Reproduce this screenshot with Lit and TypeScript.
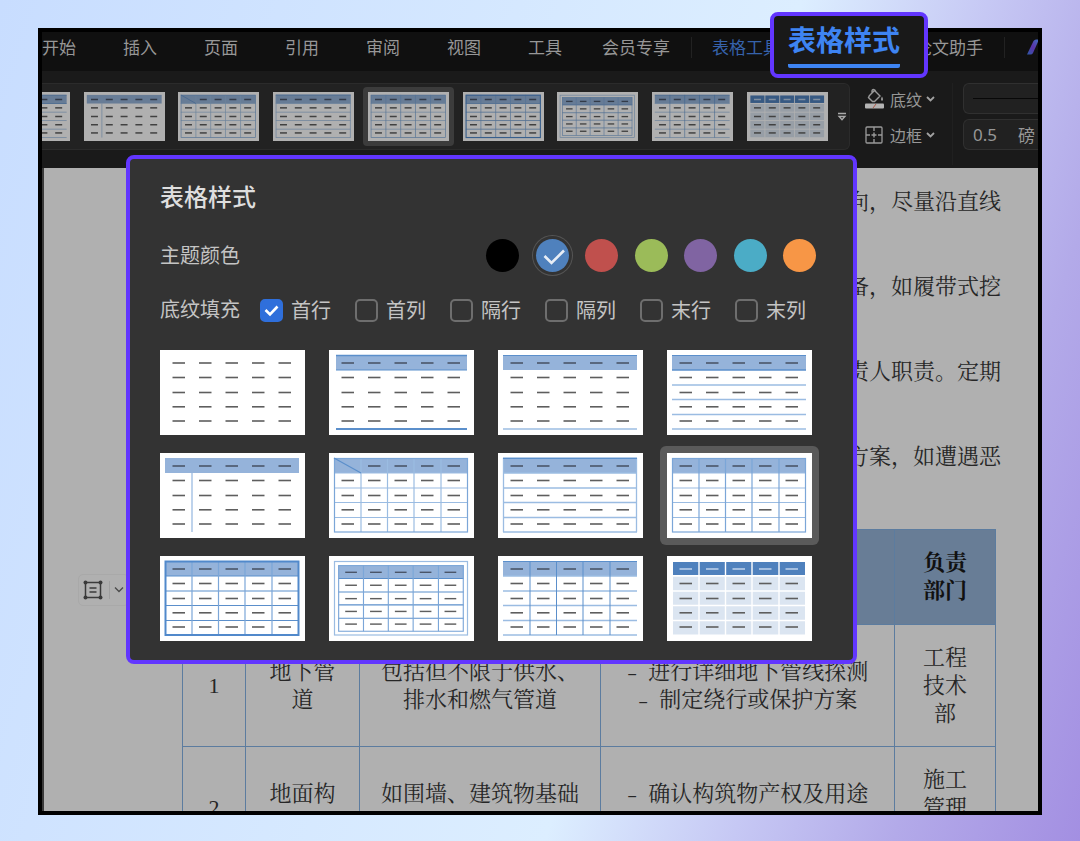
import { LitElement, html, svg, css, nothing } from "lit";
import { customElement, property } from "lit/decorators.js";
import { classMap } from "lit/directives/class-map.js";
import { styleMap } from "lit/directives/style-map.js";

type Kind =
  | "plain" | "heavy" | "light" | "rows" | "stem" | "diagonal"
  | "boxed-rows" | "grid" | "thick" | "double" | "open" | "filled";

const KINDS: { kind: Kind; name: string }[] = [
  { kind: "plain", name: "无框线" },
  { kind: "heavy", name: "上下粗线" },
  { kind: "light", name: "上下细线" },
  { kind: "rows", name: "横线" },
  { kind: "stem", name: "首列竖线" },
  { kind: "diagonal", name: "斜线表头" },
  { kind: "boxed-rows", name: "外框横线" },
  { kind: "grid", name: "网格" },
  { kind: "thick", name: "粗外框网格" },
  { kind: "double", name: "双外框网格" },
  { kind: "open", name: "开放网格" },
  { kind: "filled", name: "填充" },
];

const COLS = [5, 32, 58.5, 85, 112, 139];
const ROWS = [5, 20, 35, 49.5, 64.5, 79];
const LINE = "#5b8fcb";
const SOFT = "#9bbce2";
const HEAD = "#95b3da";

/** Miniature table drawn on a 145 x 85 sheet. */
@customElement("style-thumb")
export class StyleThumb extends LitElement {
  @property() kind: Kind = "plain";
  @property({ type: Number }) dash = 1.6;

  static styles = css`
    :host { display: block; background: #fff; }
    svg { display: block; width: 100%; height: 100%; }
  `;

  private hline(y: number, color = SOFT, w = 1.3, x1 = 5, x2 = 139) {
    return svg`<path d="M${x1} ${y}H${x2}" stroke=${color} stroke-width=${w} />`;
  }

  private vline(x: number, color = SOFT, w = 1.3, y1 = 5, y2 = 79) {
    return svg`<path d="M${x} ${y1}V${y2}" stroke=${color} stroke-width=${w} />`;
  }

  private dashes() {
    const xs = [12.5, 39, 65.5, 92, 118.5];
    const ys = [13, 27.5, 42.5, 56.8, 71];
    return ys.flatMap((y, r) =>
      xs.map((x, c) => {
        if (this.kind === "diagonal" && r === 0 && c === 0) return nothing;
        const color = this.kind === "filled" && r === 0 ? "#b9cfe9" : r === 0 && this.kind !== "plain" ? "#4a5568" : "#5e5e5e";
        return svg`<path d="M${x} ${y}h12.5" stroke=${color} stroke-width=${this.dash} />`;
      })
    );
  }

  private head() {
    return svg`<rect x="5" y="5" width="134" height="15" fill=${HEAD} />`;
  }

  private body() {
    const k = this.kind;
    const inner = ROWS.slice(1, 5);
    const innerCols = COLS.slice(1, 5);
    switch (k) {
      case "plain":
        return this.dashes();
      case "heavy":
        return svg`<rect x="7" y="5" width="131" height="15" fill=${HEAD} />
          ${this.hline(5.5, LINE, 1.6, 7, 138)}${this.hline(20, LINE, 1, 7, 138)}
          ${this.hline(79, LINE, 2, 7, 138)}${this.dashes()}`;
      case "light":
        return svg`${this.head()}${this.hline(5.5, LINE, 1)}${this.hline(79)}${this.dashes()}`;
      case "rows":
        return svg`${this.head()}${this.hline(5.5, LINE, 1)}${this.hline(20, LINE)}
          ${ROWS.slice(2).map((y) => this.hline(y))}${this.dashes()}`;
      case "stem":
        return svg`${this.head()}${this.vline(32, SOFT, 1.3, 20, 79)}${this.dashes()}`;
      case "boxed-rows":
        return svg`${this.head()}${ROWS.map((y) => this.hline(y))}
          ${this.vline(5.5)}${this.vline(138.5)}${this.hline(5.5, LINE, 1)}${this.dashes()}`;
      case "open":
        return svg`${this.head()}${this.hline(5.5, LINE, 1)}${ROWS.slice(1).map((y) => this.hline(y))}
          ${innerCols.map((x) => this.vline(x, LINE, 1))}${this.dashes()}`;
      case "filled":
        return svg`<rect x="6" y="6" width="132" height="13" fill="#4f81bd" />
          <rect x="6" y="20" width="132" height="58.5" fill="#dbe5f1" />
          ${inner.map((y) => this.hline(y, "#fff", 1.6))}${innerCols.map((x) => this.vline(x, "#fff", 1.4))}
          ${this.dashes()}`;
      default:
        return svg`${this.head()}
          ${inner.map((y) => this.hline(y, k === "grid" || k === "diagonal" ? SOFT : LINE, 1.2))}
          ${innerCols.map((x) => this.vline(x, k === "diagonal" ? SOFT : "#7ba6d8", 1.2))}
          <rect x="5.5" y="5.5" width="133" height="73.5" fill="none"
            stroke=${k === "thick" ? "#5189cb" : "#7ba6d8"} stroke-width=${k === "thick" ? 2 : 1.2} />
          ${k === "diagonal" ? svg`<path d="M5 5L32 20" stroke=${LINE} stroke-width="1.2" />` : nothing}
          ${this.dashes()}`;
    }
  }

  render() {
    return html`<svg viewBox="0 0 145 85" preserveAspectRatio="none" fill="none" aria-hidden="true">
      ${this.kind === "double"
        ? svg`<rect x="5.5" y="5.5" width="133" height="73.5" stroke=${SOFT} stroke-width="1.2" />
            <g transform="translate(4.5 4.7) scale(.937 .893)">${this.body()}</g>`
        : this.body()}
    </svg>`;
  }
}

/** Drop-down of table styles: theme colour, shading options and presets. */
@customElement("style-panel")
export class StylePanel extends LitElement {
  static styles = css`
    :host {
      display: block;
      box-sizing: border-box;
      padding: 21px 30px 19px;
      border: 4px solid #6236ff;
      border-radius: 8px;
      background: #333;
      color: #c4c4c4;
      font: 20px/28px "Noto Sans CJK SC", sans-serif;
    }
    h2 { margin: 0; font-size: 24px; line-height: 32px; font-weight: 500; color: #dedede; }
    .row { display: flex; align-items: center; margin: 0; padding: 0; border: 0; }
    .colors { justify-content: space-between; margin-top: 23px; height: 40px; }
    .swatches { display: flex; justify-content: space-between; width: 330px; margin-right: 7px; }
    .swatch { position: relative; display: block; width: 33px; height: 33px; }
    .swatch input, .opt input { appearance: none; display: block; margin: 0; box-sizing: border-box; }
    .swatch input { width: 33px; height: 33px; border-radius: 50%; background: var(--c); }
    .swatch input:checked { box-shadow: 0 0 0 3px #333, 0 0 0 4px #555; }
    .swatch svg, .opt svg { position: absolute; left: 0; top: 0; pointer-events: none; }
    .fills { margin-top: 19px; height: 32px; }
    .fills .label { width: 100px; flex: none; padding-bottom: 3px; }
    .opt { position: relative; display: flex; align-items: center; gap: 8px; width: 95px; flex: none; }
    .opt:last-child { width: auto; }
    .opt input { width: 23px; height: 23px; border: 2px solid #6e6e6e; border-radius: 5px; flex: none; }
    .opt input:checked { border-color: #2f6fdb; background: #2f6fdb; }
    .opt svg { top: 3px; }
    .presets { display: grid; grid-template-columns: repeat(4, 145px); gap: 18px 24px; margin-top: 24px; }
    .preset { padding: 0; border: 0; background: none; height: 85px; }
    .preset style-thumb { height: 85px; }
    .preset.on { box-sizing: content-box; margin: -7px; padding: 7px; border-radius: 6px; background: #5a5a5a; }
  `;

  private colors = [
    ["黑色", "#000000"], ["蓝色", "#4f81bd"], ["红色", "#c0504d"], ["绿色", "#9bbb59"],
    ["紫色", "#8064a2"], ["青色", "#4bacc6"], ["橙色", "#f79646"],
  ];
  private options = ["首行", "首列", "隔行", "隔列", "末行", "末列"];

  render() {
    return html`
      <h2>表格样式</h2>
      <div class="row colors">
        <span>主题颜色</span>
        <div class="swatches" role="radiogroup" aria-label="主题颜色">
          ${this.colors.map(([name, value], i) => html`
            <label class="swatch" style=${styleMap({ "--c": value })}>
              <input type="radio" name="theme" aria-label=${name} .checked=${i === 1} />
              ${i === 1 ? html`<svg width="33" height="33" viewBox="0 0 33 33" fill="none" aria-hidden="true">
                <path d="M8.500 17l7 7L28 11.500" stroke="#e8eef6" stroke-width="2.600" /></svg>` : nothing}
            </label>`)}
        </div>
      </div>
      <div class="row fills" role="group" aria-label="底纹填充">
        <span class="label">底纹填充</span>
        ${this.options.map((name, i) => html`
          <label class="opt">
            <input type="checkbox" .checked=${i === 0} />
            ${i === 0 ? html`<svg width="23" height="23" viewBox="0 0 23 23" fill="none" aria-hidden="true">
              <path d="M5.500 11l4.500 4.500L17.500 7.500" stroke="#fff" stroke-width="2.600" /></svg>` : nothing}
            <span>${name}</span>
          </label>`)}
      </div>
      <div class="presets">
        ${KINDS.map(({ kind, name }) => html`
          <button class=${classMap({ preset: true, on: kind === "grid" })} aria-label=${name}>
            <style-thumb .kind=${kind}></style-thumb>
          </button>`)}
      </div>`;
  }
}

@customElement("ribbon-bar")
export class RibbonBar extends LitElement {
  static styles = css`
    :host { display: block; color: #979797; font: 17px/24px "Noto Sans CJK SC", sans-serif; }
    button { font: inherit; color: inherit; background: none; border: 0; padding: 0; margin: 0; }
    .tabs { display: flex; align-items: center; height: 39px; padding-bottom: 9px; box-sizing: border-box; background: #101010; white-space: nowrap; overflow: hidden; }
    .tabs button { flex: none; }
    .main { display: flex; gap: 47px; flex: none; }
    .member { margin-left: 40px; }
    .sep { width: 1px; height: 21px; margin: 0 20px 0 21px; background: #222; flex: none; }
    .tool { color: #3662ab; margin-right: 135px; }
    .logo { flex: none; }
    .tools { display: flex; align-items: flex-start; height: 97px; padding-top: 12px; box-sizing: border-box; background: #1a1a1a; overflow: hidden; }
    .gallery {
      flex: 1; min-width: 0; display: flex; justify-content: flex-end; align-items: center; overflow: hidden;
      height: 67px; box-sizing: border-box; border: solid #2b2b2b; border-width: 1px 1px 1px 0;
      border-radius: 0 6px 6px 0; background: #222;
    }
    .strip { display: flex; justify-content: space-between; width: 839px; flex: none; }
    .item { width: 81px; height: 49px; flex: none; }
    .item style-thumb { height: 49px; filter: brightness(0.69); }
    .item.on { box-sizing: content-box; margin: -5px; padding: 5px; border-radius: 4px; background: #3c3c3c; }
    .more { width: 21px; flex: none; padding-left: 9px; }
    .more svg { display: block; }
    .pair { flex: none; margin-left: 14px; padding-top: 4px; display: grid; gap: 12px; font-size: 16px; }
    .pair button { display: flex; align-items: center; line-height: 24px; }
    .pair span { margin: 0 4px 0 5px; }
    .rule { flex: none; width: 1px; height: 82px; margin: 0 10px 0 17px; background: #202020; }
    .fields { flex: none; display: grid; gap: 5px; width: 75px; }
    .field {
      display: flex; align-items: center; box-sizing: border-box; width: 75px; height: 31px; padding-left: 9px;
      border: solid #303030; border-width: 1px 0 1px 1px; border-radius: 6px 0 0 6px; background: #212121;
    }
    .field input { width: 45px; padding: 0; border: 0; background: none; color: inherit; font: 17px/24px "Noto Sans", sans-serif; }
    .stroke { height: 1px; flex: 1; background: #080808; }
  `;

  private chevron = html`<svg width="9" height="8" viewBox="0 0 9 8" fill="none" aria-hidden="true">
    <path d="M1 2l3.500 3.500L8 2" stroke="#a2a2a2" stroke-width="1.800" /></svg>`;

  render() {
    return html`
      <nav class="tabs">
        <div class="main">
          ${["开始", "插入", "页面", "引用", "审阅", "视图", "工具"].map((t) => html`<button>${t}</button>`)}
        </div>
        <button class="member">会员专享</button>
        <span class="sep"></span>
        <button class="tool">表格工具</button>
        <button>论文助手</button>
        <span class="sep"></span>
        <svg class="logo" width="22" height="18" viewBox="0 0 22 18" aria-hidden="true">
          <defs><linearGradient id="g" x1="0" y1="1" x2="1" y2="0">
            <stop offset="0" stop-color="#2d5aa8" /><stop offset=".5" stop-color="#5b32a8" /><stop offset="1" stop-color="#3d6fc0" />
          </linearGradient></defs>
          <path d="M2 16.500L8.500 3Q9.500 1.500 11 1.500H14L8 15Q7.200 16.500 5.500 16.500Z" fill="url(#g)" />
        </svg>
      </nav>
      <div class="tools">
        <div class="gallery">
          <div class="strip">
            ${KINDS.slice(3).map(({ kind, name }) => html`
              <button class=${classMap({ item: true, on: kind === "grid" })} aria-label=${name}>
                <style-thumb .kind=${kind} .dash=${2.6}></style-thumb>
              </button>`)}
          </div>
          <button class="more" aria-label="更多样式">
            <svg width="10" height="10" viewBox="0 0 10 10" fill="none" aria-hidden="true">
              <path d="M1 1.500h8M2 4.500h6L5 7.800z" stroke="#aaa" stroke-width="1.300" /></svg>
          </button>
        </div>
        <div class="pair">
          <button>
            <svg width="21" height="22" viewBox="0 0 21 22" fill="none" aria-hidden="true">
              <path d="M5.500 7.500L10.500 2.500L16 8L10.500 13.500H8.500L4.500 9.500ZM8 5V3.200Q8 1.500 9.500 1.500T12 4" stroke="#999" stroke-width="1.400" />
              <path d="M18 8.500q2 3 0 4.500q-2-1.500 0-4.500" fill="#999" />
              <rect x="1" y="15.500" width="19" height="5" rx="1" fill="#b4b4b4" /><path d="M9 20l3-4" stroke="#b05a4a" />
            </svg><span>底纹</span>${this.chevron}
          </button>
          <button>
            <svg width="21" height="20" viewBox="0 0 21 20" fill="none" aria-hidden="true">
              <rect x="2" y="2" width="16" height="16" rx="1" stroke="#999" stroke-width="1.300" />
              <path d="M10 2v4M10 14v4M2 10h4M14 10h4M10 7.500v5M7.500 10h5" stroke="#999" stroke-width="1.400" />
            </svg><span>边框</span>${this.chevron}
          </button>
        </div>
        <span class="rule"></span>
        <div class="fields">
          <button class="field" aria-label="线型"><span class="stroke"></span></button>
          <label class="field"><input aria-label="线宽" value="0.5" /><span>磅</span></label>
        </div>
      </div>`;
  }
}

@customElement("doc-page")
export class DocPage extends LitElement {
  static styles = css`
    :host {
      display: block; position: relative; box-sizing: border-box; padding: 20px 42px 0 0;
      border-left: 2px solid #3a3a3a; background: #b0b0b0; color: #262626;
      font: 22px/28px "Liberation Serif", "Noto Serif CJK SC", "Noto Sans CJK SC", serif;
    }
    .text { display: grid; gap: 57px; justify-items: end; margin-right: -5px; }
    p { margin: 0; }
    table { width: 813px; margin: 58px 0 0 auto; border-collapse: collapse; table-layout: fixed; text-align: center; }
    th, td { border: 1px solid #5c7c9f; padding: 0; }
    th { height: 94px; background: #687d96; color: #111; font-weight: 700; }
    td { height: 122px; box-sizing: border-box; }
    .upper td { padding-bottom: 28px; }
    .upper td:first-child { padding-bottom: 0; }
    .dash { font: 18px/1 "Liberation Mono", monospace; }
    .handle {
      position: absolute; left: 34px; top: 406px; display: flex; align-items: center; box-sizing: border-box;
      height: 32px; padding: 0 4px; border: 1px solid #a9a9a9; border-radius: 5px; background: none;
    }
    .handle i { width: 1px; height: 18px; margin: 0 4px 0 6px; background: #a0a0a0; }
  `;

  render() {
    const d = html`<span class="dash">– </span>`;
    return html`
      <div class="text">
        <p>向，尽量沿直线</p><p>备，如履带式挖</p><p>责人职责。定期</p><p>方案，如遭遇恶</p>
      </div>
      <table>
        <colgroup>${[63, 114, 241, 294, 101].map((w) => html`<col style=${styleMap({ width: `${w}px` })} />`)}</colgroup>
        <thead><tr><th></th><th></th><th></th><th></th><th>负责<br />部门</th></tr></thead>
        <tbody>
          <tr><td>1</td><td>地下管<br />道</td><td>包括但不限于供水、<br />排水和燃气管道</td>
            <td>${d}进行详细地下管线探测<br />${d}制定绕行或保护方案</td><td>工程<br />技术<br />部</td></tr>
          <tr class="upper"><td>2</td><td>地面构</td><td>如围墙、建筑物基础</td>
            <td>${d}确认构筑物产权及用途</td><td>施工<br />管理</td></tr>
        </tbody>
      </table>
      <button class="handle" aria-label="布局选项">
        <svg width="20" height="20" viewBox="0 0 20 20" fill="none" stroke="#3a3a3a" aria-hidden="true">
          <path d="M2.500 2.500h15v15h-15zM6.500 8h7M6.500 12h7" stroke-width="1.500" />
          <g fill="#3a3a3a" stroke="none"><circle cx="2.500" cy="2.500" r="2" /><circle cx="17.500" cy="2.500" r="2" /><circle cx="2.500" cy="17.500" r="2" /><circle cx="17.500" cy="17.500" r="2" /></g>
        </svg><i></i>
        <svg width="10" height="8" viewBox="0 0 10 8" fill="none" aria-hidden="true"><path d="M1 1.500l4 4l4-4" stroke="#4a4a4a" stroke-width="1.300" /></svg>
      </button>`;
  }
}

@customElement("app-root")
export class AppRoot extends LitElement {
  static styles = css`
    :host {
      display: flex; box-sizing: border-box; height: 100vh; padding: 28px 38px 26px;
      background: linear-gradient(107deg, #c8ddff 0%, #dceeff 60%, #c6c8f4 74%, #b3aae9 86%, #a38fe2 100%);
    }
    .stage { position: relative; flex: 1; min-width: 0; display: flex; }
    .window { flex: 1; min-width: 0; display: flex; flex-direction: column; overflow: hidden; border: 4px solid #000; background: #b0b0b0; }
    ribbon-bar { flex: none; }
    doc-page { flex: 1 0 auto; }
    .callout {
      position: absolute; left: 732px; top: -16px; width: 158px; height: 66px; box-sizing: border-box;
      display: flex; justify-content: flex-start; padding: 5px 0 0 14px;
      border: 4px solid #6236ff; border-radius: 8px; background: #191919;
    }
    .callout span {
      height: 43px; border-bottom: 4px solid #3e84f2; border-radius: 2px; color: #3e84f2;
      font: 700 28px/36px "Noto Sans CJK SC", sans-serif;
    }
    style-panel { position: absolute; left: 88px; top: 127px; width: 731px; }
  `;

  render() {
    return html`
      <main class="stage">
        <div class="window">
          <ribbon-bar></ribbon-bar>
          <doc-page></doc-page>
        </div>
        <style-panel></style-panel>
        <div class="callout"><span>表格样式</span></div>
      </main>`;
  }
}
